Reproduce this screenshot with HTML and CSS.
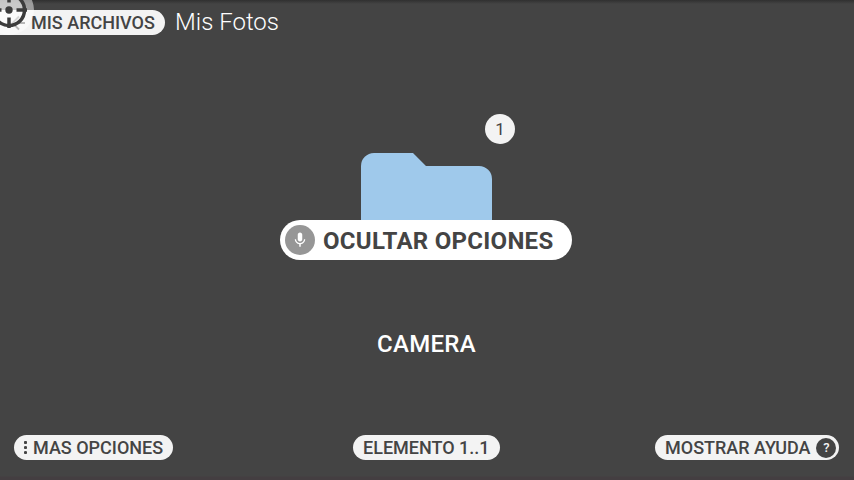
FILE: index.html
```html
<!DOCTYPE html>
<html lang="es">
<head>
<meta charset="utf-8">
<title>Mis Fotos</title>
<link rel="stylesheet" href="styles.css">
</head>
<body>
<div class="screen">
  <header class="topbar">
    <button class="pill back">
      <svg class="arrow" viewBox="0 0 16 16"><path d="M15 8H3M9 1.500L2.500 8L9 14.500"/></svg>
      <span>MIS ARCHIVOS</span>
    </button>
    <h1>Mis Fotos</h1>
  </header>
  <main class="content">
    <div class="folder">
      <svg class="folder-icon" viewBox="0 0 131 107"><path d="M13 0H52L65 13H118A13 13 0 0 1 131 26V94A13 13 0 0 1 118 107H13A13 13 0 0 1 0 94V13A13 13 0 0 1 13 0Z"/></svg>
      <span class="count">1</span>
      <button class="toggle">
        <span class="mic"><svg viewBox="0 0 24 24"><path d="M12 14c1.660 0 3-1.340 3-3V5c0-1.660-1.340-3-3-3S9 3.340 9 5v6c0 1.660 1.340 3 3 3zm5.300-3c0 3-2.540 5.100-5.300 5.100S6.700 14 6.700 11H5c0 3.410 2.720 6.230 6 6.720V21h2v-3.280c3.280-.48 6-3.300 6-6.720z"/></svg></span>
        <span class="toggle-label">OCULTAR OPCIONES</span>
      </button>
    </div>
    <div class="name">CAMERA</div>
  </main>
  <footer class="bottombar">
    <button class="pill more"><svg class="dots" viewBox="0 0 3 13"><circle cx="1.500" cy="1.500" r="1.600"/><circle cx="1.500" cy="6.500" r="1.600"/><circle cx="1.500" cy="11.500" r="1.600"/></svg><span>MAS OPCIONES</span></button>
    <button class="pill item">ELEMENTO 1..1</button>
    <button class="pill help"><span>MOSTRAR AYUDA</span><span class="question">?</span></button>
  </footer>
  <svg class="pointer" viewBox="0 0 50 50">
    <circle class="halo" cx="25" cy="25" r="25"/>
    <circle class="lens" cx="25" cy="25" r="15.500"/>
    <circle class="ring" cx="25" cy="25" r="15.500"/>
    <circle class="dot" cx="25" cy="25" r="3.700"/>
    <path class="ring" d="M25 7v10.500M25 32.500V43M7 25h10.500M32.500 25H43"/>
  </svg>
</div>
</body>
</html>
```
FILE: styles.css
```css
* { box-sizing: border-box; }
body { margin: 0; font-family: Roboto, sans-serif; }
.screen {
  position: relative;
  width: 854px;
  height: 480px;
  overflow: hidden;
  display: flex;
  flex-direction: column;
  color: #fff;
  background: linear-gradient(#303030, #444 4px, #444 476px, #443e41 477px);
}
button {
  border: 0;
  padding: 0;
  margin: 0;
  font-family: inherit;
  color: #444;
  display: flex;
  align-items: center;
  white-space: nowrap;
}
.pill {
  height: 25px;
  border-radius: 13px;
  background: #f3f3f3;
  font-size: 18px;
  line-height: 25px;
  font-weight: 500;
}
.topbar {
  height: 45px;
  padding-top: 10px;
  display: flex;
  align-items: flex-start;
}
.back {
  width: 165px;
  padding-left: 10px;
  border-radius: 0 13px 13px 0;
}
.arrow {
  width: 16px;
  height: 16px;
  margin-right: 5px;
  flex: none;
  fill: none;
  stroke: #777;
  stroke-width: 1.800;
}
h1 {
  margin: -2px 0 0 10px;
  font-size: 24px;
  line-height: 28px;
  font-weight: 300;
}
.content {
  flex: 1;
  display: flex;
  flex-direction: column;
  align-items: center;
  padding: 108px 1px 0 0;
}
.folder {
  position: relative;
  width: 131px;
  height: 107px;
  margin-right: 0;
}
.folder-icon {
  display: block;
  width: 131px;
  height: 107px;
  fill: #9fc9eb;
}
.count {
  position: absolute;
  left: 124px;
  top: -39.500px;
  width: 30px;
  height: 30px;
  border-radius: 50%;
  background: #f3f3f3;
  color: #444;
  font-size: 17px;
  line-height: 31px;
  text-align: center;
}
.toggle {
  position: absolute;
  left: -81px;
  top: 67px;
  width: 292px;
  height: 40px;
  padding-left: 5px;
  border-radius: 20px;
  background: #fff;
  font-size: 24px;
  line-height: 40px;
  font-weight: 700;
}
.toggle-label { padding-top: 2px; line-height: 38px; letter-spacing: .28px; }
.mic {
  width: 30px;
  height: 30px;
  margin-right: 8px;
  flex: none;
  border-radius: 50%;
  background: #969696;
  display: flex;
  align-items: center;
  justify-content: center;
}
.mic svg { width: 18px; height: 18px; fill: #fff; }
.name {
  margin-top: 70px;
  font-size: 24px;
  line-height: 28px;
  font-weight: 500;
  letter-spacing: .3px;
}
.bottombar {
  height: 45px;
  padding: 0 15px 0 14px;
  display: grid;
  grid-template-columns: 339px 302px 184px;
  align-items: start;
}
.more { width: 159px; padding-left: 10px; }
.dots { width: 3px; height: 13px; margin-right: 6px; fill: #444; flex: none; }
.item { width: 147px; padding-left: 10px; }
.help { width: 184px; padding-left: 10px; }
.question {
  width: 20px;
  height: 20px;
  margin-left: 6px;
  border-radius: 50%;
  background: #444;
  color: #f3f3f3;
  font-size: 13px;
  line-height: 20px;
  text-align: center;
}
.pointer {
  position: absolute;
  left: -16px;
  top: -15px;
  width: 50px;
  height: 50px;
}
.halo { fill: #fff; opacity: .48; }
.lens { fill: #fff; opacity: .45; }
.ring { fill: none; stroke: #3c3c3c; stroke-width: 3.500; }
.dot { fill: #3c3c3c; }
```
